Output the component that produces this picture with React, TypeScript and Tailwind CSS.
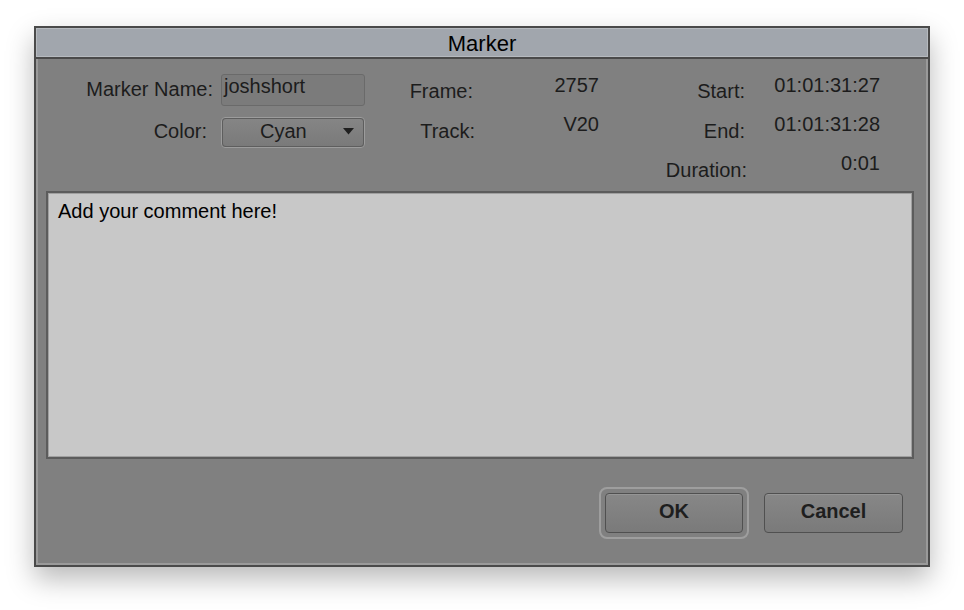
import React from "react";

const txt = "text-[20px] leading-[20px] text-[#1c1c1c] whitespace-nowrap";

export default function App() {
  return (
    <div
      className="w-[964px] h-[610px] bg-white pl-[34px] pt-[26px]"
      style={{ fontFamily: '"Liberation Sans", Arial, Helvetica, sans-serif' }}
    >
      <div className="w-[896px] h-[541px] border-2 border-[#4a4a4a] bg-[#808080] flex flex-col shadow-[0_12px_26px_rgba(0,0,0,0.28)]">
        {/* Title bar */}
        <div className="h-[29px] border border-[#b6babf] bg-[#a1a6ad] flex justify-center pt-[4px]">
          <span className="text-[22px] leading-[22px] text-black">Marker</span>
        </div>
        <div className="h-[2px] bg-[#4a4a4a]" />
        {/* Body */}
        <div className="flex-1 border-x-2 border-b-2 border-[#9a9a9a] flex flex-col">
          {/* Top fields */}
          <div className="h-[132px] flex">
            <div className="w-[183px] flex flex-col items-end pt-[20px]">
              <span className={`${txt} pr-[8px]`}>Marker Name:</span>
              <span className={`${txt} pr-[14px] mt-[22px]`}>Color:</span>
            </div>
            <div className="w-[144px] flex flex-col pt-[15px]">
              <div className="h-[32px] rounded-[3px] border border-[#6a6a6a] bg-[#7b7b7b] pl-[2px] pt-[1px]">
                <span className={txt}>joshshort</span>
              </div>
              <div className="mt-[11px] h-[31px] rounded-[4px] border border-[#9c9c9c] bg-[#5e5e5e] p-[1px]">
                <div className="h-full rounded-[3px] bg-gradient-to-b from-[#858585] to-[#7a7a7a] flex items-start pl-[37px] pt-[2px] relative">
                  <span className={txt}>Cyan</span>
                  <svg
                    className="absolute right-[9px] top-[9px]"
                    width="11"
                    height="7"
                    viewBox="0 0 11 7"
                  >
                    <polygon points="0,0 11,0 5.5,6.5" fill="#1f1f1f" />
                  </svg>
                </div>
              </div>
            </div>
            <div className="w-[110px] flex flex-col items-end pt-[22px]">
              <span className={`${txt} pr-[2px]`}>Frame:</span>
              <span className={`${txt} mt-[20px]`}>Track:</span>
            </div>
            <div className="w-[125px] flex flex-col items-end pt-[16px]">
              <span className={`${txt} pr-[1px]`}>2757</span>
              <span className={`${txt} pr-[1px] mt-[19px]`}>V20</span>
            </div>
            <div className="w-[147px] flex flex-col items-end pt-[22px]">
              <span className={`${txt} pr-[2px]`}>Start:</span>
              <span className={`${txt} pr-[2px] mt-[20px]`}>End:</span>
              <span className={`${txt} mt-[19px]`}>Duration:</span>
            </div>
            <div className="w-[134px] flex flex-col items-end pt-[16px]">
              <span className={`${txt} pr-[1px]`}>01:01:31:27</span>
              <span className={`${txt} pr-[1px] mt-[19px]`}>01:01:31:28</span>
              <span className={`${txt} pr-[1px] mt-[19px]`}>0:01</span>
            </div>
          </div>
          {/* Comment area */}
          <div className="ml-[8px] mr-[12px] h-[268px] border-2 border-[#5c5c5c] bg-[#a0a0a0] p-[1px]">
            <div className="h-full bg-[#c8c8c8] pl-[9px] pt-[7px]">
              <span className="text-[20px] leading-[20px] text-black">Add your comment here!</span>
            </div>
          </div>
          {/* Buttons */}
          <div className="mt-[28px] flex justify-end items-center pr-[23px]">
            <div className="w-[150px] h-[52px] rounded-[8px] border-2 border-[#9e9e9e] p-[4px]">
              <div className="h-[40px] rounded-[4px] border border-[#505050] bg-gradient-to-b from-[#878787] to-[#7a7a7a] shadow-[inset_0_1px_0_#959595] flex justify-center pt-[7px]">
                <span className="text-[20px] leading-[20px] font-bold text-[#1e1e1e]">OK</span>
              </div>
            </div>
            <div className="ml-[15px] w-[139px] h-[40px] rounded-[4px] border border-[#505050] bg-gradient-to-b from-[#878787] to-[#7a7a7a] shadow-[inset_0_1px_0_#959595] flex justify-center pt-[7px]">
              <span className="text-[20px] leading-[20px] font-bold text-[#1e1e1e]">Cancel</span>
            </div>
          </div>
        </div>
      </div>
    </div>
  );
}
